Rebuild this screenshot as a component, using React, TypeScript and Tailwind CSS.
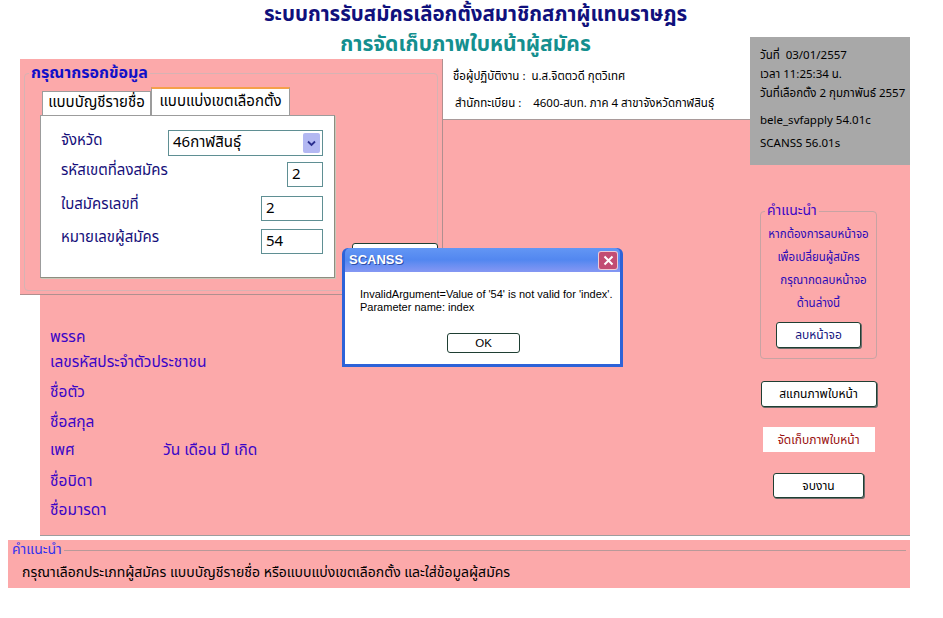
import React from 'react';

const thai = 'font-["Tahoma","Noto_Sans_Thai","Loma","Garuda","Noto_Sans","DejaVu_Sans",sans-serif]';

function Btn({ label, className }: { label: string; className: string }) {
  return (
    <button
      className={`flex items-center justify-center rounded-[3px] border border-[#1f3f33] bg-white shadow-[1px_1px_0_#6b6b6b] ${className}`}
    >
      {label}
    </button>
  );
}

function Field({ value, width }: { value: string; width: string }) {
  return (
    <div className={`flex h-[25px] items-center border border-[#5f8f93] bg-white pl-1 text-[15px] text-black ${width}`}>
      {value}
    </div>
  );
}

export default function App() {
  return (
    <div className={`relative h-[618px] w-[943px] overflow-hidden bg-white ${thai}`}>
      {/* titles */}
      <header className="flex h-[59px] flex-col items-center pt-[1px]">
        <h1 className="ml-[8px] text-[20.5px] font-bold leading-[28px] text-[#10107c]">
          ระบบการรับสมัครเลือกตั้งสมาชิกสภาผู้แทนราษฎร
        </h1>
        <h2 className="mr-[12px] mt-[2px] text-[21px] font-bold leading-[28px] text-[#148f8f]">
          การจัดเก็บภาพใบหน้าผู้สมัคร
        </h2>
      </header>

      {/* operator info */}
      <div className="flex h-[60px] flex-col gap-[11px] pl-[453px] pt-[10px] text-[11.5px] leading-[16px] text-black">
        <p>ชื่อผู้ปฏิบัติงาน : &nbsp;น.ส.จิตตวดี กุตวิเทศ</p>
        <p className="pl-[2px]">สำนักทะเบียน : &nbsp;&nbsp;&nbsp;4600-สบท. ภาค 4 สาขาจังหวัดกาฬสินธุ์</p>
      </div>

      {/* main pink area */}
      <main className="ml-[40px] flex h-[416px] w-[870px] border-t border-[#a99a9a] bg-[#fca9aa] shadow-[0_1px_0_#9d9d9d]">
        <div className="flex flex-1 flex-col pl-[10px] pt-[208px] text-[15.5px] leading-[20px] text-[#3a06c7]">
          <p className="h-[25px]">พรรค</p>
          <p className="h-[30px]">เลขรหัสประจำตัวประชาชน</p>
          <p className="h-[30px]">ชื่อตัว</p>
          <p className="h-[28px]">ชื่อสกุล</p>
          <div className="flex h-[31px]">
            <p className="w-[113px]">เพศ</p>
            <p>วัน เดือน ปี เกิด</p>
          </div>
          <p className="h-[29px]">ชื่อบิดา</p>
          <p>ชื่อมารดา</p>
        </div>

        <aside className="mr-[33px] flex w-[117px] flex-col items-center pt-[83px]">
          <fieldset className="flex h-[156px] w-[117px] flex-col items-center rounded-[4px] border border-[#c8a3a3] px-0">
            <legend className="ml-[4px] px-[2px] text-[14px] leading-[16px] text-[#3a06c7]">คำแนะนำ</legend>
            <div className="mt-[4px] flex flex-col items-center text-[11.5px] leading-[23px] text-[#2a0ab8]">
              <p>หากต้องการลบหน้าจอ</p>
              <p>เพื่อเปลี่ยนผู้สมัคร</p>
              <p className="pl-[10px]">กรุณากดลบหน้าจอ</p>
              <p>ด้านล่างนี้</p>
            </div>
            <Btn label="ลบหน้าจอ" className="mt-[7px] h-[26px] w-[85px] text-[12px] text-[#14147f]" />
          </fieldset>
          <Btn label="สแกนภาพใบหน้า" className="mt-[22px] h-[26px] w-[116px] text-[12px] text-black" />
          <div className="mt-[20px] flex h-[25px] w-[112px] items-center justify-center bg-white text-[12px] text-[#9a0f0f]">
            จัดเก็บภาพใบหน้า
          </div>
          <Btn label="จบงาน" className="mt-[21px] h-[25px] w-[91px] text-[12px] text-black" />
        </aside>
      </main>

      {/* bottom hint */}
      <fieldset className="ml-[8px] mt-[5px] h-[48px] w-[902px] border-0 bg-[#fca9aa] px-[4px]">
        <div className="flex items-center pt-[2px]">
          <span className="text-[14px] leading-[16px] text-[#3333ee]">คำแนะนำ</span>
          <span className="ml-[2px] h-px flex-1 bg-[#b89999]" />
        </div>
        <p className="ml-[10px] mt-[7px] text-[14px] leading-[16px] text-black">
          กรุณาเลือกประเภทผู้สมัคร แบบบัญชีรายชื่อ หรือแบบแบ่งเขตเลือกตั้ง และใส่ข้อมูลผู้สมัคร
        </p>
      </fieldset>

      {/* input panel (overlaps the main area) */}
      <section className="absolute left-[20px] top-[59px] h-[236px] w-[423px] border-r border-b border-[#b08f8f] bg-[#fca9aa] p-[4px]">
        <fieldset className="h-[228px] rounded-[4px] border border-[#d6b3b3] px-[15px]">
          <legend className="-ml-[11px] px-[2px] text-[16px] font-bold leading-[20px] text-[#1010c8]">กรุณากรอกข้อมูล</legend>
          <div className="ml-[2px] mt-[4px] flex items-end">
            <div className="flex h-[24px] w-[109px] items-center justify-center border border-b-0 border-[#9c9c9c] bg-white text-[15px] text-black">
              แบบบัญชีรายชื่อ
            </div>
            <div className="flex h-[28px] w-[139px] items-center justify-center border-x border-t-2 border-x-[#9c9c9c] border-t-[#f5a04a] bg-white text-[15px] text-black">
              แบบแบ่งเขตเลือกตั้ง
            </div>
          </div>
          <div className="flex h-[163px] w-[295px] flex-col border border-[#9c9c9c] border-r-[#8d8d80] border-b-[#8d8d80] bg-white pl-[20px] pr-[11px] pt-[14px] shadow-[1px_1px_0_#c8c8b8] text-[15px] leading-[18px] text-[#160f7a]">
            <div className="flex items-start justify-between">
              <span className="pt-[2px]">จังหวัด</span>
              <div className="flex h-[26px] w-[155px] items-center justify-between border border-[#5f8f93] bg-white pl-1 pr-[2px] text-[15px] text-black">
                <span>46กาฬสินธุ์</span>
                <span className="flex h-[20px] w-[17px] items-center justify-center rounded-[2px] bg-[#b3b8f2]">
                  <svg width="9" height="7" viewBox="0 0 9 7">
                    <path d="M1 1.5 L4.5 5 L8 1.5" fill="none" stroke="#2b2f8f" strokeWidth="1.8" />
                  </svg>
                </span>
              </div>
            </div>
            <div className="mt-[6px] flex items-start justify-between">
              <span>รหัสเขตที่ลงสมัคร</span>
              <Field value="2" width="w-[36px]" />
            </div>
            <div className="mt-[9px] flex items-start justify-between">
              <span>ใบสมัครเลขที่</span>
              <Field value="2" width="w-[62px]" />
            </div>
            <div className="mt-[8px] flex items-start justify-between">
              <span>หมายเลขผู้สมัคร</span>
              <Field value="54" width="w-[62px]" />
            </div>
          </div>
        </fieldset>
      </section>

      {/* version / date box */}
      <aside className="absolute left-[750px] top-[37px] flex h-[128px] w-[160px] flex-col bg-[#a8a8a8] pl-[10px] pt-[9px] text-[11.5px] leading-[19px] text-black">
        <p>วันที่ &nbsp;03/01/2557</p>
        <p>เวลา 11:25:34 น.</p>
        <p>วันที่เลือกตั้ง 2 กุมภาพันธ์ 2557</p>
        <p className="mt-[8px]">bele_svfapply 54.01c</p>
        <p className="mt-[4px]">SCANSS 56.01s</p>
      </aside>

      {/* button hidden behind the dialog */}
      <div className="absolute left-[352px] top-[243px] h-[24px] w-[86px] rounded-[3px] border border-[#1f3f33] bg-white" />

      {/* message box */}
      <div className='absolute left-[342px] top-[248px] flex h-[119px] w-[281px] flex-col rounded-t-[6px] bg-[#2d63d8] p-[3px] pt-0 font-["Liberation_Sans",sans-serif]'>
        <div className="flex h-[24px] items-center justify-between rounded-t-[5px] bg-gradient-to-b from-[#6396f4] via-[#5287f0] to-[#8597f3] pl-[4px] pr-[2px]">
          <span className="text-[13px] font-bold text-white [text-shadow:1px_1px_0_#2d4ea8]">SCANSS</span>
          <span className="flex h-[19px] w-[20px] items-center justify-center rounded-[3px] border border-white/70 bg-[#c24d73]">
            <svg width="11" height="11" viewBox="0 0 11 11">
              <path d="M1.5 1.5 L9.5 9.5 M9.5 1.5 L1.5 9.5" stroke="white" strokeWidth="2" />
            </svg>
          </span>
        </div>
        <div className="flex flex-1 flex-col whitespace-nowrap bg-white pl-[15px] pt-[16px] text-[11px] leading-[13px] text-black">
          <p>InvalidArgument=Value of '54' is not valid for 'index'.</p>
          <p>Parameter name: index</p>
          <button className="ml-[87px] mt-[19px] flex h-[20px] w-[73px] items-center justify-center rounded-[3px] border border-[#1f3f33] bg-white text-[11.5px]">
            OK
          </button>
        </div>
      </div>
    </div>
  );
}
